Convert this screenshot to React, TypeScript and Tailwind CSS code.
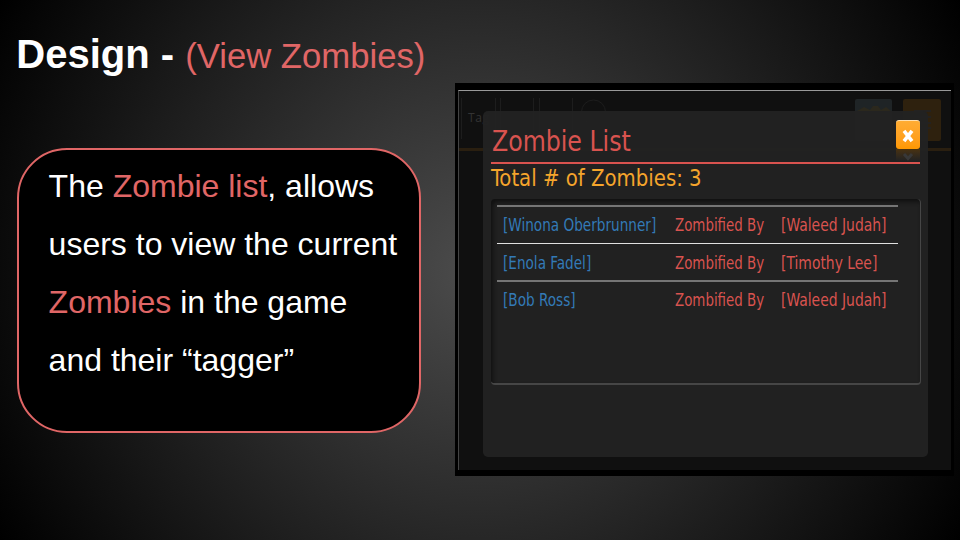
import type { ReactNode } from "react";

const zombies = [
  { name: "[Winona Oberbrunner]", tagger: "[Waleed Judah]", line: "h-[2px] bg-[#757575]", text: "pt-[6px]" },
  { name: "[Enola Fadel]", tagger: "[Timothy Lee]", line: "mt-[0.5px] h-px bg-[#e0e0e0]", text: "pt-[7px]" },
  { name: "[Bob Ross]", tagger: "[Waleed Judah]", line: "h-[2px] bg-[#757575]", text: "pt-[6px]" },
];

function Accent({ children }: { children: ReactNode }) {
  return <span className="text-[#e06666]">{children}</span>;
}

function Description() {
  return (
    <div className="mt-[70.5px] h-[285px] w-[404px] rounded-[50px] border-2 border-[#e06666] bg-black pl-[29.3px] pt-[7px] text-[32px] leading-[58px] text-white">
      <p>The <Accent>Zombie list</Accent>, allows</p>
      <p>users to view the current</p>
      <p><Accent>Zombies</Accent> in the game</p>
      <p>and their “tagger”</p>
    </div>
  );
}

/* Dimmed page header that lies behind the dialog */
function Backdrop() {
  return (
    <svg className="absolute -left-px -top-px" width="493" height="380" viewBox="458 90 493 380" fill="none">
      <path d="M461.5 98v41M495.5 98v41M500.5 98v41M533.5 98v41M539.5 98v41M572.5 98v41" stroke="#1d1d1d" />
      <circle cx="593.5" cy="112" r="12" stroke="#1d1d1d" />
      <text x="468" y="122" fontSize="12" fill="#333" fontFamily="Open Sans, sans-serif" textLength="21">Tag</text>
      <path d="M459 149.5h492" stroke="#2a1f10" strokeWidth="3" />
      <rect x="855" y="99" width="37" height="42" rx="2" fill="#1f2426" />
      <path d="M857 111l7-4 6 3 3-4h5l3 4 5-3 5 4z" fill="#2b281d" />
      <rect x="903" y="99" width="38" height="42" rx="2" fill="#2e210e" />
      <path d="M914 111h17M914 117h17M914 123h17M914 128h17" stroke="#242220" strokeWidth="2" />
    </svg>
  );
}

function CloseButton() {
  return (
    <div className="flex h-[42px] w-6 flex-col">
      <div className="flex h-[29px] items-center justify-center rounded-[3px] border-t border-[#ffe0b0] bg-linear-to-b from-[#ffac33] to-[#ff9800]">
        <svg width="12" height="14" viewBox="0 0 12 14" className="mt-px">
          <path d="M2 1.8l8 10.4M10 1.8l-8 10.4" stroke="#fff" strokeWidth="3.6" />
        </svg>
      </div>
      <div className="flex h-[12px] justify-center bg-linear-to-b from-[#49320f] to-[#222]">
        <svg width="12" height="10" viewBox="0 0 12 10" className="mt-[4px]">
          <path d="M2 1l4 4.5L10 1" stroke="#383838" strokeWidth="3" fill="none" />
        </svg>
      </div>
    </div>
  );
}

function ZombieDialog() {
  return (
    <div className="relative ml-[24px] mt-[20px] h-[346px] w-[445px] rounded-[5px] bg-[#222222]/97 pl-[8px] pt-[9px]">
      <div className="flex h-[44px] w-[429px] justify-between border-b-2 border-[#d9534f]">
        <h2 className="origin-left scale-x-[0.94] whitespace-nowrap pl-px pt-[5px] text-[28px] leading-[34px] text-[#d9534f]">Zombie List</h2>
        <CloseButton />
      </div>
      <p className="h-[35px] w-max origin-left scale-x-[0.953] whitespace-nowrap text-[23px] leading-[28px] text-[#f5a52c]">Total # of Zombies: 3</p>
      <div className="h-[186px] w-[430px] rounded-[4px] border-b-2 border-r border-[#464646] pl-[6px] pt-[6px] shadow-[inset_2px_3px_4px_#111]">
        <div className="w-[401px]">
          {zombies.map((z) => (
            <div key={z.name} className="flex h-[37.5px] flex-col">
              <div className={`${z.line} shrink-0`} />
              <div className={`${z.text} flex whitespace-nowrap pl-[6px] text-[17px] leading-[24px] text-[#d9534f]`}>
                <span className="w-[172px]"><span className="inline-block origin-left scale-x-[0.89] text-[#337ab7]">{z.name}</span></span>
                <span className="w-[106px]"><span className="inline-block origin-left scale-x-[0.875]">Zombified By</span></span>
                <span className="inline-block origin-left scale-x-[0.91]">{z.tagger}</span>
              </div>
            </div>
          ))}
        </div>
      </div>
    </div>
  );
}

export default function App() {
  return (
    <main className="flex h-[540px] w-[960px] overflow-hidden bg-[radial-gradient(circle_551px_at_480px_270px,#4c4c4c,#000)] font-['Liberation_Sans',Arial,sans-serif]">
      <section className="w-[455px] shrink-0 pl-[17.3px] pt-[31px]">
        <h1 className="-ml-px h-[46px] whitespace-nowrap text-[40px] font-bold leading-[46px] text-white">
          Design - <span className="text-[34.67px] font-normal text-[#e06666]">(View Zombies)</span>
        </h1>
        <Description />
      </section>
      <section className="mt-[83px] h-[393px] w-[499px] bg-black pl-[3px] pt-[7px] font-['DejaVu_Sans_Condensed','DejaVu_Sans',sans-serif]">
        <div className="relative h-[380px] w-[493px] border-l border-t border-l-[#444] border-t-[#999] bg-[#101010]">
          <Backdrop />
          <ZombieDialog />
        </div>
      </section>
    </main>
  );
}
